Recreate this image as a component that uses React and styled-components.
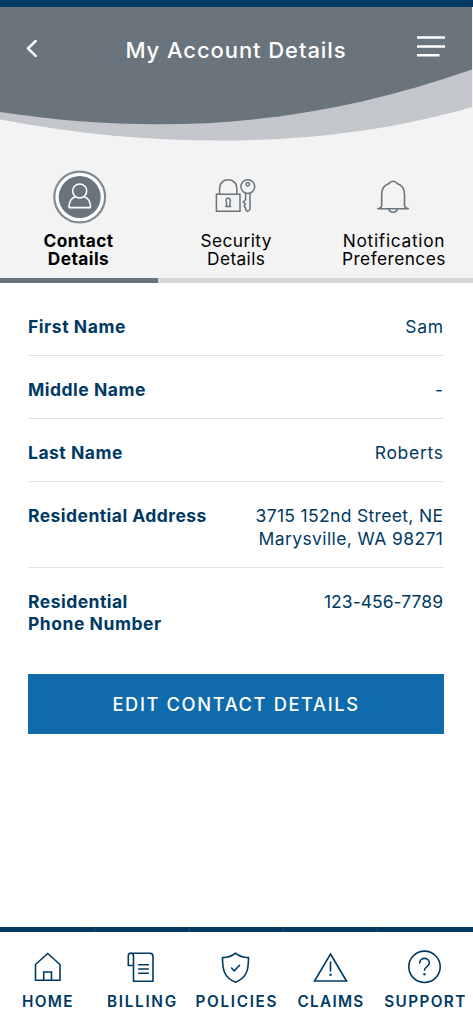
import React from "react";
import styled, { createGlobalStyle } from "styled-components";

const GlobalStyle = createGlobalStyle`
  *, *::before, *::after {
    box-sizing: border-box;
  }
  body {
    margin: 0;
    background: #fff;
    font-family: Inter, "Liberation Sans", sans-serif;
  }
`;

const Screen = styled.div`
  display: flex;
  flex-direction: column;
  width: 100%;
  height: 1024px;
  overflow: hidden;
  color: #003a63;
`;

const Top = styled.header`
  height: 278px;
  background: #f3f3f3;
  border-top: 7px solid #003a63;
  position: relative;
`;

/* curved backdrop that lies under the title row */
const Wave = styled.svg`
  position: absolute;
  top: 0;
  left: 0;
`;

const TitleBar = styled.div`
  position: relative;
  display: grid;
  grid-template-columns: 63px 1fr 63px;
  align-items: center;
  height: 88px;
`;

const IconButton = styled.button`
  display: flex;
  width: 63px;
  height: 88px;
  padding: 0;
  border: 0;
  background: none;
`;

const Title = styled.h1`
  margin: 0 1px 2px 0;
  font-size: 22px;
  font-weight: 500;
  letter-spacing: ${(props) => props.$track}px;
  line-height: 28px;
  text-align: center;
  white-space: nowrap;
  color: #fff;
`;

const Tabs = styled.nav`
  position: relative;
  display: grid;
  grid-template-columns: repeat(3, 1fr);
  padding-top: 76px;
`;

const Tab = styled.a`
  display: flex;
  flex-direction: column;
  align-items: center;
  color: #000;
`;

const TabText = styled.span`
  display: flex;
  flex-direction: column;
  align-items: center;
  margin-top: 7px;
  padding-right: 1px;
  font-size: 17.3px;
  font-weight: ${(props) => (props.$active ? 700 : 400)};
  line-height: 17.5px;
`;

const Track = styled.span`
  letter-spacing: ${(props) => props.$track}px;
  margin-right: ${(props) => -props.$track}px;
  white-space: nowrap;
`;

const Progress = styled.div`
  flex: none;
  height: 5px;
  background: #d5d6d6;
`;

const ProgressFill = styled.div`
  width: 33.33%;
  height: 100%;
  background: #6a747c;
`;

const Details = styled.main`
  flex: 1;
  padding: 9.5px 29.5px 0 28px;
`;

const Row = styled.div`
  display: flex;
  justify-content: space-between;
  padding: 23px 0 17px;
  border-bottom: 1px solid ${(props) => (props.$last ? "transparent" : "#dfe1e3")};
  font-size: 17.5px;
  line-height: 22.3px;
`;

const Label = styled.div`
  display: flex;
  flex-direction: column;
  align-items: flex-start;
  font-weight: 700;
`;

const Value = styled.div`
  display: flex;
  flex-direction: column;
  align-items: flex-end;
  padding-right: 0.5px;
  font-weight: 400;
`;

const EditButton = styled.button`
  display: block;
  width: 100%;
  height: 60px;
  margin-top: 20.5px;
  padding: 0 1px 0 0;
  border: 0;
  background: #106bad;
  color: #fff;
  font-family: inherit;
  font-size: 18.3px;
  font-weight: 500;
`;

const BottomNav = styled.nav`
  flex: none;
  display: grid;
  grid-template-columns: repeat(5, 94.4px);
  height: 97px;
  border-top: 5px solid #003a63;
`;

const NavItem = styled.a`
  position: relative;
  display: flex;
  flex-direction: column;
  align-items: center;
  font-size: 15.3px;
  font-weight: 600;
  line-height: 18px;

  svg {
    margin: 16.5px 0 9.5px;
  }

  /* faint seam in the bar between neighbouring items */
  &:not(:last-child)::after {
    content: "";
    position: absolute;
    top: -5px;
    right: -0.8px;
    width: 1px;
    height: 5px;
    background: #1f5177;
  }
`;

const Svg = styled.svg`
  display: block;
  overflow: visible;
  fill: none;
  stroke: ${(props) => props.$color};
  stroke-width: ${(props) => props.$weight || 1.6};
  stroke-linecap: round;
  stroke-linejoin: round;
`;

const GREY = "#6a747c";
const NAVY = "#003a63";

const ContactIcon = () => (
  <Svg width="56" height="54" viewBox="0 0 56 54" $color="#fff">
    <circle cx="28.7" cy="26" r="25.4" stroke="#7f8a91" strokeWidth="2.2" fill="#fff" />
    <circle cx="28.7" cy="26" r="21" stroke="none" fill={GREY} />
    <circle cx="28.7" cy="20" r="7" />
    <path d="M24 25.800C20 27.300 18 30.800 18 36.600H39.500C39.500 30.800 37.500 27.300 33.500 25.800" />
  </Svg>
);

const SecurityIcon = () => (
  <Svg width="56" height="54" viewBox="0 0 56 54" $color={GREY} $weight={1.5}>
    <path strokeLinejoin="miter" d="M8.400 23.300H32V40.200H8.400Z" />
    <path d="M11.600 23.300V17.300C11.600 5.800 28.800 5.800 28.800 17.300V23.300" />
    <path d="M18.500 35.500V31.500C15.800 25.700 24.600 25.700 21.900 31.500V35.500M17.700 35.500H22.700" />
    <circle cx="39.800" cy="15.600" r="6.900" />
    <circle cx="39.800" cy="13.200" r="1.700" />
    <path d="M37.600 22.300V28.500L35.200 31L37.400 32.800L36.200 35.200L37.600 36.900V38.700L39.500 40.500L42 38.500V22.300" />
  </Svg>
);

const BellIcon = () => (
  <Svg width="56" height="54" viewBox="0.800 0 56 54" $color={GREY}>
    <path d="M12.600 37.700H43.200C41.200 37.500 39.300 36.500 39.300 34V23.700C39.300 17.200 36.500 14 32 12.600C30.300 9.500 25.500 9.500 23.800 12.600C19.300 14 16.500 17.200 16.500 23.700V34C16.500 36.500 14.600 37.500 12.600 37.700" />
    <path d="M23.800 38.200C24.300 42.300 31.500 42.300 32 38.200" />
  </Svg>
);

const navIcons = {
  home: (
    <path strokeLinejoin="miter" d="M5.500 15.500L17.700 4.500L30 15.500V31.300H5.500ZM13.700 31V23H21.500V31" />
  ),
  billing: (
    <path d="M7.300 4.200H26Q29 4.200 29 7.500V32.300H9.500V7C9.500 3.200 4.300 3.200 4.300 7V16.500H9.500M14.700 15.700H24.300M14.700 20H24.300M14.700 24.300H24.300" />
  ),
  policies: (
    <path d="M17.500 4.200C13.500 7.500 9 8.700 4.500 8.500C4.500 21 6 28.500 17.500 33.300C29 28.500 30.500 21 30.500 8.500C26 8.700 21.500 7.500 17.500 4.200ZM13.500 19L16.400 21.800L21.500 16.300" />
  ),
  claims: (
    <>
      <path strokeLinejoin="miter" d="M17.500 5L33.500 32H1.500Z" />
      <path d="M17.500 13V22" />
      <circle cx="17.500" cy="25.700" r=".5" />
    </>
  ),
  support: (
    <>
      <circle cx="17.500" cy="17.800" r="15.700" />
      <path d="M12.700 14C12.700 7.800 22.300 7.800 22.300 14C22.300 17.800 17.500 17.300 17.500 21.300" />
      <circle cx="17.500" cy="25.300" r=".5" />
    </>
  ),
};

const tabs = [
  { icon: <ContactIcon />, active: true, lines: [["Contact", 0.4], ["Details", 0.45]] },
  { icon: <SecurityIcon />, lines: [["Security", 0.45], ["Details", 0.4]] },
  { icon: <BellIcon />, lines: [["Notification", 0.7], ["Preferences", 0.45]] },
];

const rows = [
  { label: [["First Name", 0.55]], value: [["Sam", 0.7]] },
  { label: [["Middle Name", 0.5]], value: [["-", 0]] },
  { label: [["Last Name", 0.5]], value: [["Roberts", 0.7]] },
  {
    label: [["Residential Address", 0.45]],
    value: [["3715 152nd Street, NE", 0.33], ["Marysville, WA 98271", 0.4]],
  },
  {
    label: [["Residential", 0.47], ["Phone Number", 0.53]],
    value: [["123-456-7789", 0.03]],
  },
];

const navItems = [
  ["home", "HOME", 1.3],
  ["billing", "BILLING", 1.7],
  ["policies", "POLICIES", 1.7],
  ["claims", "CLAIMS", 1.3],
  ["support", "SUPPORT", 1.4],
];

const Lines = ({ lines }) =>
  lines.map(([text, track]) => (
    <Track key={text} $track={track}>
      {text}
    </Track>
  ));

const App = () => {
  return (
    <>
      <GlobalStyle />
      <Screen>
        <Top>
          <Wave width="472" height="140" viewBox="0 7 472 140">
            <path d="M0 0H472V107C325 150 155 149 0 119.500Z" fill="#c3c6cb" />
            <path d="M0 0H472V69.500C310 126.500 160 136 0 112Z" fill={GREY} />
          </Wave>
          <TitleBar>
            <IconButton aria-label="Back">
              <Svg width="63" height="88" viewBox="0 7 63 88" $color="#fff" $weight={2.5}>
                <path d="M35.700 41L28 48.400L35.700 55.800" />
              </Svg>
            </IconButton>
            <Title $track={0.92}>My Account Details</Title>
            <IconButton aria-label="Menu">
              <Svg width="63" height="88" viewBox="410 7 63 88" $color="#fff" $weight={2.5}>
                <path strokeLinecap="butt" d="M417 37.500H445M417 46.500H445M417 55.300H439.500" />
              </Svg>
            </IconButton>
          </TitleBar>
          <Tabs>
            {tabs.map((tab, i) => (
              <Tab key={i}>
                {tab.icon}
                <TabText $active={tab.active}>
                  <Lines lines={tab.lines} />
                </TabText>
              </Tab>
            ))}
          </Tabs>
        </Top>
        <Progress>
          <ProgressFill />
        </Progress>
        <Details>
          {rows.map((row, i) => (
            <Row key={i} $last={i === rows.length - 1}>
              <Label>
                <Lines lines={row.label} />
              </Label>
              <Value>
                <Lines lines={row.value} />
              </Value>
            </Row>
          ))}
          <EditButton>
            <Track $track={1.62}>EDIT CONTACT DETAILS</Track>
          </EditButton>
        </Details>
        <BottomNav>
          {navItems.map(([icon, text, track]) => (
            <NavItem key={icon}>
              <Svg width="35" height="35" viewBox="0 0 35 35" $color={NAVY}>
                {navIcons[icon]}
              </Svg>
              <Track $track={track}>{text}</Track>
            </NavItem>
          ))}
        </BottomNav>
      </Screen>
    </>
  );
};

export default App;
